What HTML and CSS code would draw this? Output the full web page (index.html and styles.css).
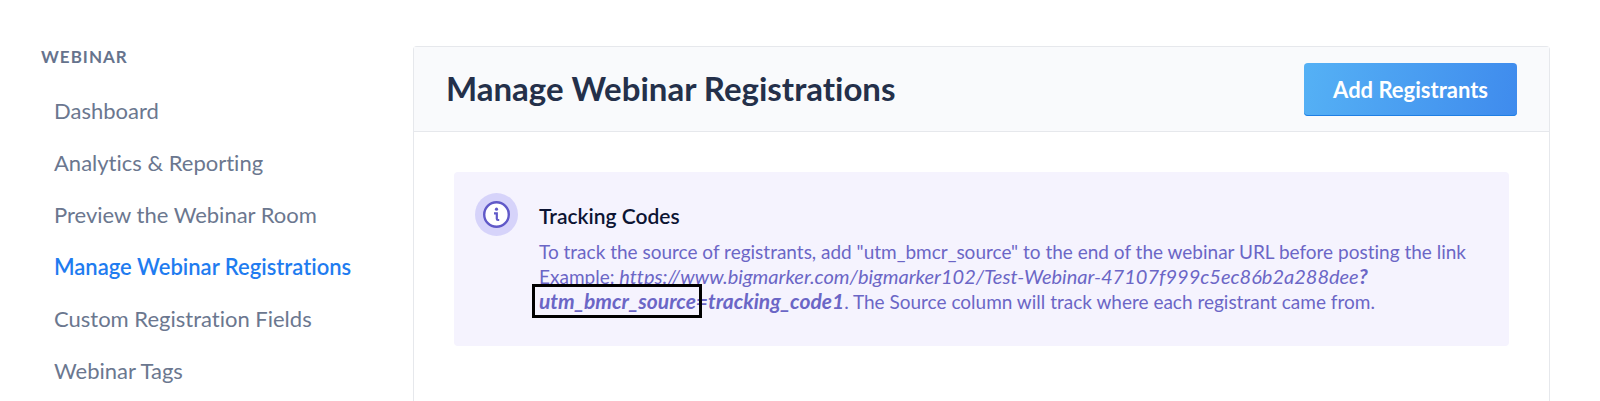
FILE: index.html
```
<!DOCTYPE html>
<html lang="en">

<head>
    <meta charset="UTF-8">
    <meta name="viewport" content="width=device-width, initial-scale=1.0">
    <title>Manage Webinar Registrations</title>
    <link rel="stylesheet" href="styles.css">
</head>

<body>
    <div class="page">
        <nav class="sidebar">
            <h2 class="sidebar-title">WEBINAR</h2>
            <ul class="menu">
                <li><a href="#">Dashboard</a></li>
                <li><a href="#">Analytics &amp; Reporting</a></li>
                <li><a href="#">Preview the Webinar Room</a></li>
                <li><a href="#" class="active">Manage Webinar Registrations</a></li>
                <li><a href="#">Custom Registration Fields</a></li>
                <li><a href="#">Webinar Tags</a></li>
            </ul>
        </nav>

        <main class="card">
            <header class="card-header">
                <h1>Manage Webinar Registrations</h1>
                <button type="button" class="btn">Add Registrants</button>
            </header>
            <section class="notice">
                <svg class="notice-icon" viewBox="0 0 43 43" aria-hidden="true">
                    <circle cx="21.5" cy="21.5" r="21.5" fill="#d6d3fa" />
                    <circle cx="21.5" cy="21.5" r="12.3" fill="#fff" stroke="#6059c8" stroke-width="2.4" />
                    <circle cx="21.5" cy="16.2" r="1.6" fill="#6059c8" />
                    <path d="M19 20.4h2.8v5.4q0 1.2 1.2 1.2h1.2" fill="none" stroke="#6059c8" stroke-width="2.2" />
                </svg>
                <div class="notice-body">
                    <h3>Tracking Codes</h3>
                    <p>To track the source of registrants, add "utm_bmcr_source" to the end of the webinar URL before posting the link<br>
                        Example: <em>https://www.bigmarker.com/bigmarker102/Test-Webinar-47107f999c5ec86b2a288dee<strong>?<br>
                        <span class="marked">utm_bmcr_source</span>=tracking_code1</strong></em>. The Source column will track where each registrant came from.</p>
                </div>
            </section>
        </main>
    </div>
</body>

</html>
```

FILE: styles.css
```
* {
    box-sizing: border-box;
}

body {
    margin: 0;
    font-family: Lato, "Liberation Sans", sans-serif;
    font-variant-ligatures: none;
    background: #fff;
}

h1,
h2,
h3,
p,
ul {
    margin: 0;
    padding: 0;
}

.page {
    display: flex;
    min-height: 100vh;
    padding: 46px 50px 0 41px;
}

.sidebar {
    flex: 0 0 372px;
}

.sidebar-title {
    color: #66738d;
    font-size: 17px;
    line-height: 22px;
    letter-spacing: 1px;
}

.menu {
    list-style: none;
    padding: 17px 0 0 13px;
}

.menu a {
    display: block;
    color: #6b778f;
    font-size: 22px;
    line-height: 52px;
    text-decoration: none;
    white-space: nowrap;
}

.menu a.active {
    color: #1f7cf0;
    font-weight: 600;
}

.card {
    flex: 1;
    min-width: 0;
    border: 1px solid #e6e8ec;
    border-bottom: 0;
    border-radius: 4px 4px 0 0;
}

.card-header {
    display: flex;
    justify-content: space-between;
    align-items: flex-start;
    padding: 16px 32px 15px;
    background: #f9fafc;
    border-bottom: 1px solid #e6e8ec;
}

.card-header h1 {
    color: #24304a;
    font-size: 33px;
    line-height: 50px;
}

.btn {
    padding: 0 29px;
    border: 0;
    border-radius: 4px;
    background: linear-gradient(100deg, #55b1f5, #3f8bed);
    box-shadow: inset 0 -1px 0 #1f7fe4;
    color: #fff;
    font-family: inherit;
    font-size: 22px;
    font-weight: 700;
    line-height: 53px;
    cursor: pointer;
}

.notice {
    display: flex;
    align-items: flex-start;
    gap: 21px;
    margin: 40px;
    padding: 21px 21px 32px;
    border-radius: 4px;
    background: #f5f3fe;
}

.notice-icon {
    flex: none;
    width: 43px;
    height: 43px;
}

.notice-body h3 {
    margin-top: 11px;
    color: #0c1433;
    font-size: 21px;
    font-weight: 600;
    line-height: 24px;
}

.notice-body p {
    margin-top: 12px;
    color: #6b66c6;
    font-size: 19px;
    line-height: 24px;
}

.notice-body em {
    font-size: 20px;
}

.notice-body strong {
    font-size: 21px;
}

.marked {
    position: relative;
}

/* black frame drawn around the query parameter */
.marked::after {
    content: '';
    position: absolute;
    inset: -4px -6px -5px -7px;
    border: 3px solid #000;
}
```
